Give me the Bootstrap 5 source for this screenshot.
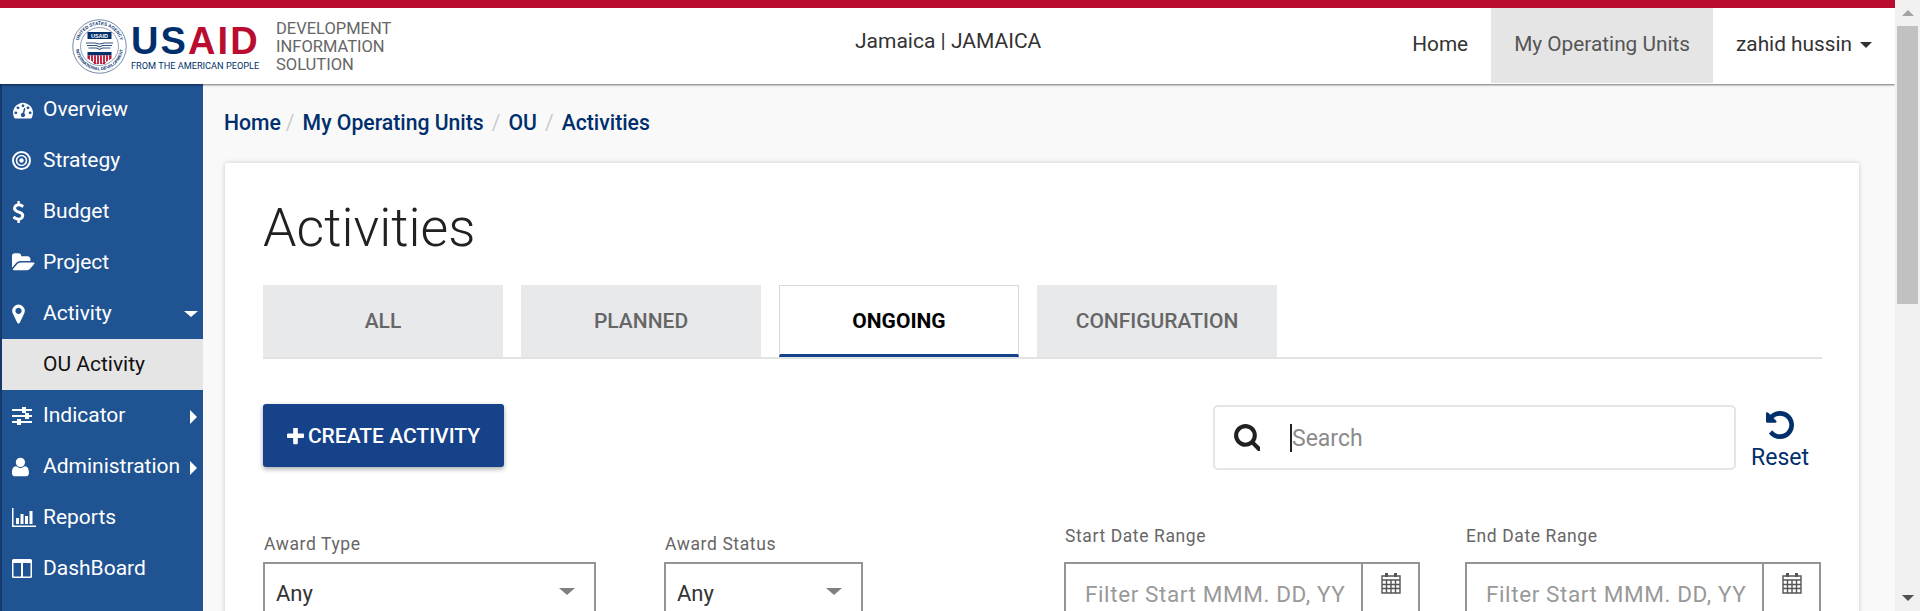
<!DOCTYPE html>
<html lang="en">
<head>
<meta charset="utf-8">
<title>Activities</title>
<link href="https://cdn.jsdelivr.net/npm/bootstrap@5.3.0/dist/css/bootstrap.min.css" rel="stylesheet">
<style>
html, body { height: 100%; overflow: hidden; }
body { font-family: Roboto, "Liberation Sans", sans-serif; font-size: 21px; background: #f9f9f9; color: #212121; }
.page-wrap { height: 611px; }
.page-col { width: 1895px; height: 611px; overflow: hidden; }

/* fake browser scrollbar */
.sb-rail { width: 25px; height: 611px; background: #f1f1f1; }
.sb-up, .sb-down { height: 26px; }
.sb-thumb { height: 278px; margin: 0 2px 0 2px; background: #c1c1c1; }
.sb-fill { flex: 1; }
.tri-up { border-left: 6px solid transparent; border-right: 6px solid transparent; border-bottom: 6px solid #a3a3a3; }
.tri-down { border-left: 6px solid transparent; border-right: 6px solid transparent; border-top: 6px solid #505050; }

/* header */
.usaid-top { height: 84px; padding: 0; background: #fff; border-top: 8px solid #ba0c2f; box-shadow: 0 1px 2px rgba(0,0,0,.55); position: relative; z-index: 3; flex-wrap: nowrap; }
.logo-box { width: 855px; padding-left: 72px; }
.seal-svg { width: 55px; height: 55px; margin-top: 11px; }
.word-box { margin-left: 4px; width: 130px; }
.word-main { font-family: "Liberation Sans", sans-serif; font-weight: 700; font-size: 38px; line-height: 29px; letter-spacing: 2.1px; height: 30px; margin-top: 19px; }
.word-us { color: #002f6c; }
.word-aid { color: #ba0c2f; }
.word-tag { font-size: 9.2px; line-height: 11px; color: #002f6c; white-space: nowrap; margin-top: 3px; }
.dis-name { margin-left: 15px; margin-top: 12px; font-size: 16.5px; line-height: 18px; color: #666; }
.ou-title { width: 186px; line-height: 24px; margin-top: 21px; color: #333; white-space: nowrap; }
.top-links { margin-left: auto; height: 76px; }
.top-links .nav-link { height: 75px; line-height: 72px; padding: 0 23px; color: #333; font-size: 20.8px; }
.top-links .nav-link.on { background: #e5e5e5; color: #555; }
.top-links .dropdown-toggle::after { margin-left: 8px; border-top-width: 6px; border-left-width: 6px; border-right-width: 6px; vertical-align: 3px; }

/* sidebar */
.side-menu { width: 203px; flex-shrink: 0; background: #205391; border-left: 2px solid #17386b; height: 527px; }
.side-menu a { height: 51px; padding-left: 10px; color: #fff; font-size: 21px; text-decoration: none; white-space: nowrap; }
.side-menu a.on { background: #e5e5e5; color: #111; }
.ic-cell { width: 31px; flex-shrink: 0; }
.side-ic { fill: #fff; display: block; }
.side-tri-d { position: absolute; right: 5px; top: 23px; border-left: 7px solid transparent; border-right: 7px solid transparent; border-top: 6px solid #fff; }
.side-tri-r { position: absolute; right: 6px; top: 20px; border-top: 7px solid transparent; border-bottom: 7px solid transparent; border-left: 7px solid #fff; }

/* main */
.main-area { width: 1692px; padding: 0 36px 0 22px; }
.crumbs { margin: 0 0 0 -1px; padding-top: 27px; height: 79px; font-size: 21.2px; font-weight: 500; line-height: 24px; }
.crumbs .breadcrumb-item a { color: #002f6c; text-decoration: none; }
.crumbs .breadcrumb-item + .breadcrumb-item { padding-left: 8px; }
.crumbs .breadcrumb-item + .breadcrumb-item::before { color: #ccc; padding-right: 8px; font-weight: 400; }
.crumbs .breadcrumb-item:nth-child(2) { margin-left: -3px; }
.sheet { width: 1634px; border: 0; border-radius: 2px; box-shadow: 0 0 5px rgba(0,0,0,.2); padding: 0 37px 0 38px; height: 500px; }
.sheet h1 { font-weight: 300; font-size: 53.6px; line-height: 60px; margin: 35px 0 27px; color: #212121; }
.tab-strip { border-bottom: 2px solid #e3e3e3; gap: 18px; height: 74px; }
.tab-strip .nav-link { width: 240px; height: 72px; margin: 0; border: 0; border-radius: 0; background: #e8e9eb; color: #666; font-size: 21px; font-weight: 500; text-align: center; line-height: 72px; padding: 0; }
.tab-strip .nav-link.active { background: #fff; color: #000; font-weight: 700; border: 1px solid #d8d8d8; border-bottom: 3px solid #164289; line-height: 70px; }
.tool-row { margin-top: 45px; height: 66px; }
.make-btn { width: 241px; height: 63px; background: #164289; border: 0; border-radius: 3px; color: #fff; font-size: 21px; font-weight: 500; padding: 2px 0 0; box-shadow: 0 2px 5px rgba(0,0,0,.35); white-space: nowrap; }
.make-btn svg { fill: #fff; margin-right: 4px; vertical-align: -2px; }
.search-box { width: 523px; height: 65px; margin-left: auto; margin-top: 1px; border: 2px solid #e5e5e5; border-radius: 5px; background: #fff; padding-left: 18px; }
.search-box svg { fill: #212121; flex-shrink: 0; }
.search-box input { border: 0; outline: 0; padding: 3px 0 0; margin-left: 31px; font-size: 23px; width: 440px; color: #212121; caret-color: #212121; }
.search-box input::placeholder { color: #8b8b8b; }
.caret-mark { width: 2px; height: 28px; margin-left: 30px; margin-right: -31px; background: #222; flex-shrink: 0; }
.reset-link { margin: 7px 12px 0 14px; width: 60px; color: #002f6c; text-decoration: none; font-size: 23px; line-height: 24px; text-align: center; }
.reset-link svg { fill: #002f6c; display: block; margin: 0 auto 7px; }
.filter-row { margin-top: 56px; }
.field-lbl { display: block; font-size: 17.5px; letter-spacing: .6px; line-height: 20px; color: #666; margin: 0 0 8px 1px; white-space: nowrap; }
.pick-box { height: 70px; border: 2px solid #949494; border-radius: 0; background: #fff; position: relative; font-size: 22px; color: #333; padding: 13px 0 0 11px; }
.pick-box::after { content: ""; position: absolute; top: 24px; right: 19px; border-left: 8px solid transparent; border-right: 8px solid transparent; border-top: 7px solid #808080; }
.date-box { height: 70px; border: 2px solid #949494; background: #fff; }
.date-box input { border: 0; outline: 0; padding: 0 0 0 19px; height: 44px; margin-top: 8px; width: 295px; font-size: 22.5px; letter-spacing: .6px; }
.date-box input::placeholder { color: #999; }
.cal-cell { width: 57px; border-left: 2px solid #949494; padding-top: 9px; }
.w-type { width: 333px; margin-top: 8px; }
.w-status { width: 199px; margin: 8px 0 0 68px; }
.w-start { width: 356px; margin-left: 201px; }
.w-end { width: 356px; margin-left: 45px; }
.w-start .field-lbl, .w-end .field-lbl { margin-bottom: 16px; }
</style>
</head>
<body>
<div class="page-wrap d-flex">
  <div class="page-col">
    <nav class="navbar usaid-top align-items-start">
      <div class="logo-box d-flex align-items-start">
        <svg class="seal-svg" viewBox="0 0 110 110">
          <defs>
            <path id="ring-top" d="M12 62A43.500 43.500 0 1 1 98 62"/>
            <path id="ring-low" d="M8 48A47.500 47.500 0 1 0 102 48"/>
          </defs>
          <circle cx="55" cy="55" r="53.500" fill="#fff" stroke="#47618c" stroke-width="1.500"/>
          <circle cx="55" cy="55" r="38" fill="#fff" stroke="#47618c" stroke-width="1.200"/>
          <text font-family="Liberation Sans" font-size="9" font-weight="700" fill="#002f6c"><textPath href="#ring-top" startOffset="50%" text-anchor="middle">UNITED STATES AGENCY</textPath></text>
          <text font-family="Liberation Sans" font-size="8.500" font-weight="700" fill="#002f6c"><textPath href="#ring-low" startOffset="50%" text-anchor="middle">INTERNATIONAL DEVELOPMENT</textPath></text>
          <rect x="31" y="26" width="48" height="14" fill="#002f6c"/>
          <text x="55" y="37" font-family="Liberation Sans" font-size="11" font-weight="700" fill="#fff" text-anchor="middle">USAID</text>
          <path d="M28 48h17l10 2 10-2h17M30 53h19l6 3 6-3h19M33 58h16l6 3 6-3h16" fill="none" stroke="#34527f" stroke-width="2.200"/>
          <rect x="31" y="66" width="48" height="7" fill="#002f6c"/>
          <path d="M31 73h48v6l-6 4-4 2-4 5h-20l-4-5-4-2-6-4z" fill="#ba0c2f"/>
          <path d="M37 73v11M43 73v13M49 73v16M55 73v17M61 73v16M67 73v13M73 73v11" stroke="#fff" stroke-width="2.500"/>
        </svg>
        <div class="word-box">
          <div class="word-main"><span class="word-us">US</span><span class="word-aid">AID</span></div>
          <div class="word-tag">FROM THE AMERICAN PEOPLE</div>
        </div>
        <div class="dis-name">DEVELOPMENT<br>INFORMATION<br>SOLUTION</div>
      </div>
      <div class="ou-title">Jamaica | JAMAICA</div>
      <ul class="nav top-links">
        <li class="nav-item"><a class="nav-link" href="#">Home</a></li>
        <li class="nav-item"><a class="nav-link on" href="#">My Operating Units</a></li>
        <li class="nav-item"><a class="nav-link dropdown-toggle" href="#">zahid hussin</a></li>
      </ul>
    </nav>

    <div class="d-flex">
      <div class="side-menu d-flex flex-column">
        <a class="d-flex align-items-center position-relative" href="#"><span class="ic-cell"><svg class="side-ic" width="22" height="20" viewBox="0 0 1792 1792"><path d="M384 1152q0-53-37.5-90.5t-90.5-37.5-90.5 37.5-37.5 90.5 37.5 90.5 90.5 37.5 90.5-37.5 37.5-90.5zm192-448q0-53-37.5-90.5t-90.5-37.5-90.5 37.5-37.5 90.5 37.5 90.5 90.5 37.5 90.5-37.5 37.5-90.5zm428 481l101-382q6-26-7.5-48.5t-38.5-29.5-48 6.5-30 39.5l-101 382q-60 5-107 43.5t-63 98.5q-20 77 20 146t117 89 146-20 89-117q16-60-6-117t-72-91zm660-33q0-53-37.5-90.5t-90.5-37.5-90.5 37.5-37.5 90.5 37.5 90.5 90.5 37.5 90.5-37.5 37.5-90.5zm-640-640q0-53-37.5-90.5t-90.5-37.5-90.5 37.5-37.5 90.5 37.5 90.5 90.5 37.5 90.5-37.5 37.5-90.5zm448 192q0-53-37.5-90.5t-90.5-37.5-90.5 37.5-37.5 90.5 37.5 90.5 90.5 37.5 90.5-37.5 37.5-90.5zm320 448q0 261-141 483-19 29-54 29h-1402q-35 0-54-29-141-221-141-483 0-182 71-348t191-286 286-191 348-71 348 71 286 191 191 286 71 348z"/></svg></span>Overview</a>
        <a class="d-flex align-items-center position-relative" href="#"><span class="ic-cell"><svg class="side-ic" width="19" height="19" viewBox="0 0 19 19"><g fill="none" stroke="#fff"><circle cx="9.5" cy="9.5" r="8.5" stroke-width="2"/><circle cx="9.5" cy="9.5" r="5" stroke-width="1.6"/></g><circle cx="9.5" cy="9.5" r="2.2"/></svg></span>Strategy</a>
        <a class="d-flex align-items-center position-relative" href="#"><span class="ic-cell"><svg class="side-ic" width="13" height="22" viewBox="0 0 1024 1792"><path d="M978 1185q0 153-99.5 263.5t-258.5 136.5v175q0 14-9 23t-23 9h-135q-13 0-22.5-9.5t-9.5-22.5v-175q-66-9-127.5-31t-101.5-44.5-74-48-46.5-37.5-17.5-18q-17-21-2-41l103-135q7-10 23-12 15-2 24 9l2 2q113 99 243 125 37 8 74 8 81 0 142.5-43t61.5-122q0-28-15-53t-33.5-42-58.5-37.5-66-32-80-32.5q-39-16-61.5-25t-61.5-26.5-62.5-31-56.5-35.5-53.5-42.5-43.5-49-35.5-58-21-66.5-8.5-78q0-138 98-242t255-134v-180q0-13 9.5-22.5t22.5-9.5h135q14 0 23 9t9 23v176q57 6 110.5 23t87 33.5 63.5 37.5 39 29 15 14q17 18 5 38l-81 146q-8 15-23 16-14 3-27-7-3-3-14.5-12t-39-26.5-58.5-32-74.5-26-85.5-11.5q-95 0-155 43t-60 111q0 26 8.5 48t29.5 41.5 39.5 33 56 31 60.5 27 70 27.5q53 20 81 31.5t76 35 75.5 42.5 62 50 53 63.5 31.5 76.5 13 94z"/></svg></span>Budget</a>
        <a class="d-flex align-items-center position-relative" href="#"><span class="ic-cell"><svg class="side-ic" width="23" height="19" viewBox="0 160 1920 1472"><path d="M1879 952q0 31-31 66l-336 396q-43 51-120.5 86.5t-143.5 35.5h-1088q-34 0-60.5-13t-26.5-43q0-31 31-66l336-396q43-51 120.5-86.5t143.5-35.5h1088q34 0 60.5 13t26.5 43zm-343-344v160h-832q-94 0-197 47.5t-164 119.5l-337 396-5 6q0-4-.5-12.5t-.5-12.5v-960q0-92 66-158t158-66h320q92 0 158 66t66 158v32h544q92 0 158 66t66 158z"/></svg></span>Project</a>
        <a class="d-flex align-items-center position-relative" href="#"><span class="ic-cell"><svg class="side-ic" width="13" height="22" viewBox="0 0 1024 1792"><path d="M768 640q0-106-75-181t-181-75-181 75-75 181 75 181 181 75 181-75 75-181zm256 0q0 109-33 179l-364 774q-16 33-47.5 52t-67.5 19-67.5-19-46.5-52l-365-774q-33-70-33-179 0-212 150-362t362-150 362 150 150 362z"/></svg></span>Activity<span class="side-tri-d"></span></a>
        <a class="d-flex align-items-center on" href="#"><span class="ic-cell"></span>OU Activity</a>
        <a class="d-flex align-items-center position-relative" href="#"><span class="ic-cell"><svg class="side-ic" width="20" height="18" viewBox="0 0 20 18"><path d="M0 2h20v2H0zM0 8h20v2H0zM0 14h20v2H0z"/><path d="M10 0h4v6h-4zM13 6h4v6h-4zM5 12h4v6H5z"/></svg></span>Indicator<span class="side-tri-r"></span></a>
        <a class="d-flex align-items-center position-relative" href="#"><span class="ic-cell"><svg class="side-ic" width="17" height="20" viewBox="200 128 1408 1536"><path d="M1600 1405q0 120-73 189.5t-194 69.5h-874q-121 0-194-69.5t-73-189.5q0-53 3.5-103.5t14-109 26.5-108.5 43-97.5 62-81 85.5-53.5 111.5-20q9 0 42 21.5t74.5 48 108 48 133.5 21.5 133.5-21.5 108-48 74.5-48 42-21.5q61 0 111.5 20t85.5 53.5 62 81 43 97.5 26.5 108.5 14 109 3.5 103.5zm-320-893q0 159-112.5 271.5t-271.5 112.5-271.5-112.5-112.5-271.5 112.5-271.5 271.5-112.5 271.5 112.5 112.5 271.5z"/></svg></span>Administration<span class="side-tri-r"></span></a>
        <a class="d-flex align-items-center position-relative" href="#"><span class="ic-cell"><svg class="side-ic" width="24" height="19" viewBox="0 0 24 19"><path d="M0 0h1.5v17.5H24V19H0zM4 10h3v6H4zM8.5 6h3v10h-3zM13 8h3v8h-3zM17.5 3h3v13h-3z"/></svg></span>Reports</a>
        <a class="d-flex align-items-center position-relative" href="#"><span class="ic-cell"><svg class="side-ic" width="20" height="19" viewBox="0 0 20 19"><path d="M1.5 0h17A1.5 1.5 0 0 1 20 1.5v16a1.500 1.500 0 0 1-1.500 1.500h-17A1.500 1.500 0 0 1 0 17.500v-16A1.500 1.500 0 0 1 1.500 0zM1.500 4v13.500h7.500V4zM11 4v13.500h7.500V4z"/></svg></span>DashBoard</a>
      </div>

      <main class="main-area">
        <ol class="breadcrumb crumbs">
          <li class="breadcrumb-item"><a href="#">Home</a></li>
          <li class="breadcrumb-item"><a href="#">My Operating Units</a></li>
          <li class="breadcrumb-item"><a href="#">OU</a></li>
          <li class="breadcrumb-item"><a href="#">Activities</a></li>
        </ol>
        <div class="card sheet">
          <h1>Activities</h1>
          <ul class="nav nav-tabs tab-strip">
            <li class="nav-item"><a class="nav-link" href="#">ALL</a></li>
            <li class="nav-item"><a class="nav-link" href="#">PLANNED</a></li>
            <li class="nav-item"><a class="nav-link active" href="#">ONGOING</a></li>
            <li class="nav-item"><a class="nav-link" href="#">CONFIGURATION</a></li>
          </ul>
          <div class="tool-row d-flex align-items-start">
            <button class="btn make-btn" type="button"><svg width="17" height="17" viewBox="192 192 1408 1408"><path d="M1600 736v192q0 40-28 68t-68 28h-416v416q0 40-28 68t-68 28h-192q-40 0-68-28t-28-68v-416h-416q-40 0-68-28t-28-68v-192q0-40 28-68t68-28h416v-416q0-40 28-68t68-28h192q40 0 68 28t28 68v416h416q40 0 68 28t28 68z"/></svg>CREATE ACTIVITY</button>
            <div class="search-box d-flex align-items-center">
              <svg width="27" height="27" viewBox="0 128 1664 1664"><path d="M1216 832q0-185-131.500-316.500t-316.500-131.500-316.500 131.500-131.500 316.500 131.500 316.500 316.500 131.500 316.500-131.500 131.500-316.500zm512 832q0 52-38 90t-90 38q-54 0-90-38l-343-342q-179 124-399 124-143 0-273.500-55.500t-225-150-150-225-55.500-273.500 55.500-273.500 150-225 225-150 273.500-55.500 273.500 55.500 225 150 150 225 55.500 273.500q0 220-124 399l343 343q37 37 37 90z"/></svg>
              <span class="caret-mark"></span>
              <input type="text" placeholder="Search">
            </div>
            <a class="reset-link" href="#"><svg width="28" height="28" viewBox="128 128 1536 1536"><path d="M1664 896q0 156-61 298t-164 245-245 164-298 61q-172 0-327-72.500t-264-204.500q-7-10-6.500-22.500t8.500-20.500l137-138q10-9 25-9 16 2 23 12 73 95 179 147t225 52q104 0 198.500-40.500t163.500-109.500 109.500-163.500 40.500-198.500-40.500-198.500-109.500-163.500-163.500-109.500-198.500-40.500q-98 0-188 35.500t-160 101.500l137 138q31 30 14 69-17 40-59 40h-448q-26 0-45-19t-19-45v-448q0-42 40-59 39-17 69 14l130 129q107-101 244.500-156.500t284.500-55.500q156 0 298 61t245 164 164 245 61 298z"/></svg>Reset</a>
          </div>
          <div class="filter-row d-flex align-items-start">
            <div class="w-type"><label class="field-lbl">Award Type</label><div class="pick-box">Any</div></div>
            <div class="w-status"><label class="field-lbl">Award Status</label><div class="pick-box">Any</div></div>
            <div class="w-start"><label class="field-lbl">Start Date Range</label>
              <div class="date-box d-flex"><input type="text" placeholder="Filter Start MMM. DD, YY"><div class="cal-cell d-flex justify-content-center"><svg width="20" height="21" viewBox="0 0 20 21"><path fill="#555" d="M4 0h3v4H4zM13 0h3v4h-3z"/><path fill="none" stroke="#555" stroke-width="1.400" d="M1 3h18v17H1zM1 7h18M1 11.500h18M1 15.500h18M5.500 7v13M10 7v13M14.500 7v13"/></svg></div></div>
            </div>
            <div class="w-end"><label class="field-lbl">End Date Range</label>
              <div class="date-box d-flex"><input type="text" placeholder="Filter Start MMM. DD, YY"><div class="cal-cell d-flex justify-content-center"><svg width="20" height="21" viewBox="0 0 20 21"><path fill="#555" d="M4 0h3v4H4zM13 0h3v4h-3z"/><path fill="none" stroke="#555" stroke-width="1.400" d="M1 3h18v17H1zM1 7h18M1 11.500h18M1 15.500h18M5.500 7v13M10 7v13M14.500 7v13"/></svg></div></div>
            </div>
          </div>
        </div>
      </main>
    </div>
  </div>
  <div class="sb-rail d-flex flex-column">
    <div class="sb-up d-flex justify-content-center align-items-center"><span class="tri-up"></span></div>
    <div class="sb-thumb"></div>
    <div class="sb-fill"></div>
    <div class="sb-down d-flex justify-content-center align-items-center"><span class="tri-down"></span></div>
  </div>
</div>
<script src="https://cdn.jsdelivr.net/npm/bootstrap@5.3.0/dist/js/bootstrap.bundle.min.js"></script>
</body>
</html>
